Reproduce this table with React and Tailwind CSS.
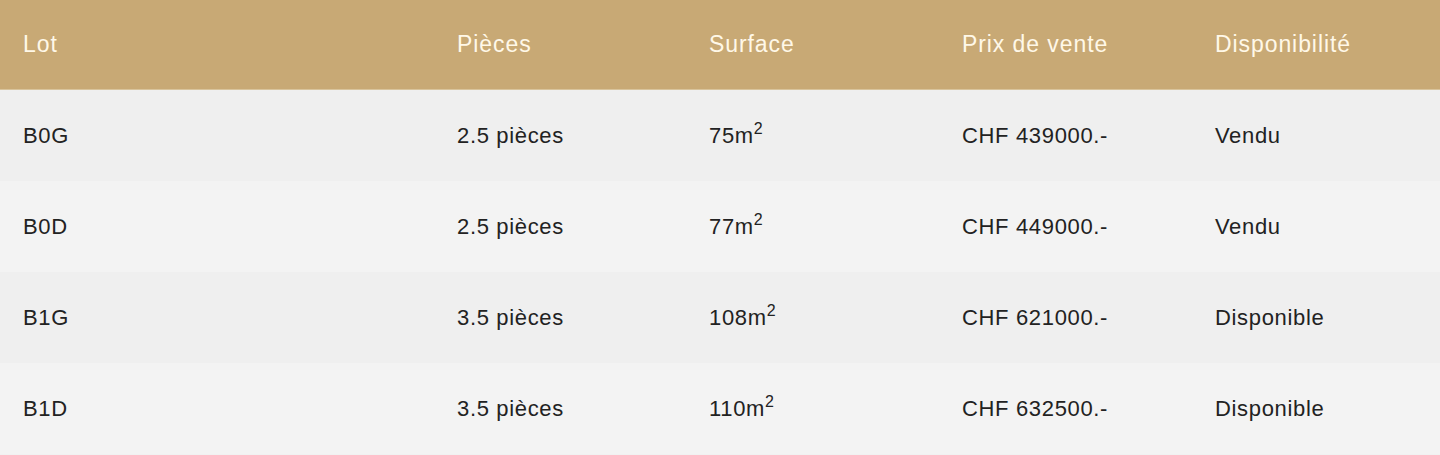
export default function App() {
  const rows = [
    ["B0G", "2.5 pièces", "75", "CHF 439000.-", "Vendu"],
    ["B0D", "2.5 pièces", "77", "CHF 449000.-", "Vendu"],
    ["B1G", "3.5 pièces", "108", "CHF 621000.-", "Disponible"],
    ["B1D", "3.5 pièces", "110", "CHF 632500.-", "Disponible"],
  ];
  const cols = "grid grid-cols-[434px_252px_253px_253px_248px]";
  return (
    <div className="w-[1440px] h-[455px] overflow-hidden bg-[#f1f1f1] font-[Liberation_Sans,Arial,sans-serif] text-[22px] tracking-[0.03em]">
      <div className={`${cols} h-[90px] items-center bg-[#c8a975] text-[#fff8e8] text-[23px] tracking-[0.04em] border-b border-[#d9c49c]`}>
        <div className="pl-[23px]">Lot</div>
        <div className="pl-[23px]">Pièces</div>
        <div className="pl-[23px]">Surface</div>
        <div className="pl-[23px]">Prix de vente</div>
        <div className="pl-[23px]">Disponibilité</div>
      </div>
      {rows.map((r, i) => (
        <div
          key={r[0]}
          className={`${cols} h-[91px] items-center text-[#222222] ${i % 2 === 0 ? "bg-[#efefef]" : "bg-[#f3f3f3]"}`}
        >
          <div className="pl-[23px]">{r[0]}</div>
          <div className="pl-[23px]">{r[1]}</div>
          <div className="pl-[23px]">
            {r[2]}m<sup className="text-[16px] -top-[9px]">2</sup>
          </div>
          <div className="pl-[23px]">{r[3]}</div>
          <div className="pl-[23px]">{r[4]}</div>
        </div>
      ))}
    </div>
  );
}
